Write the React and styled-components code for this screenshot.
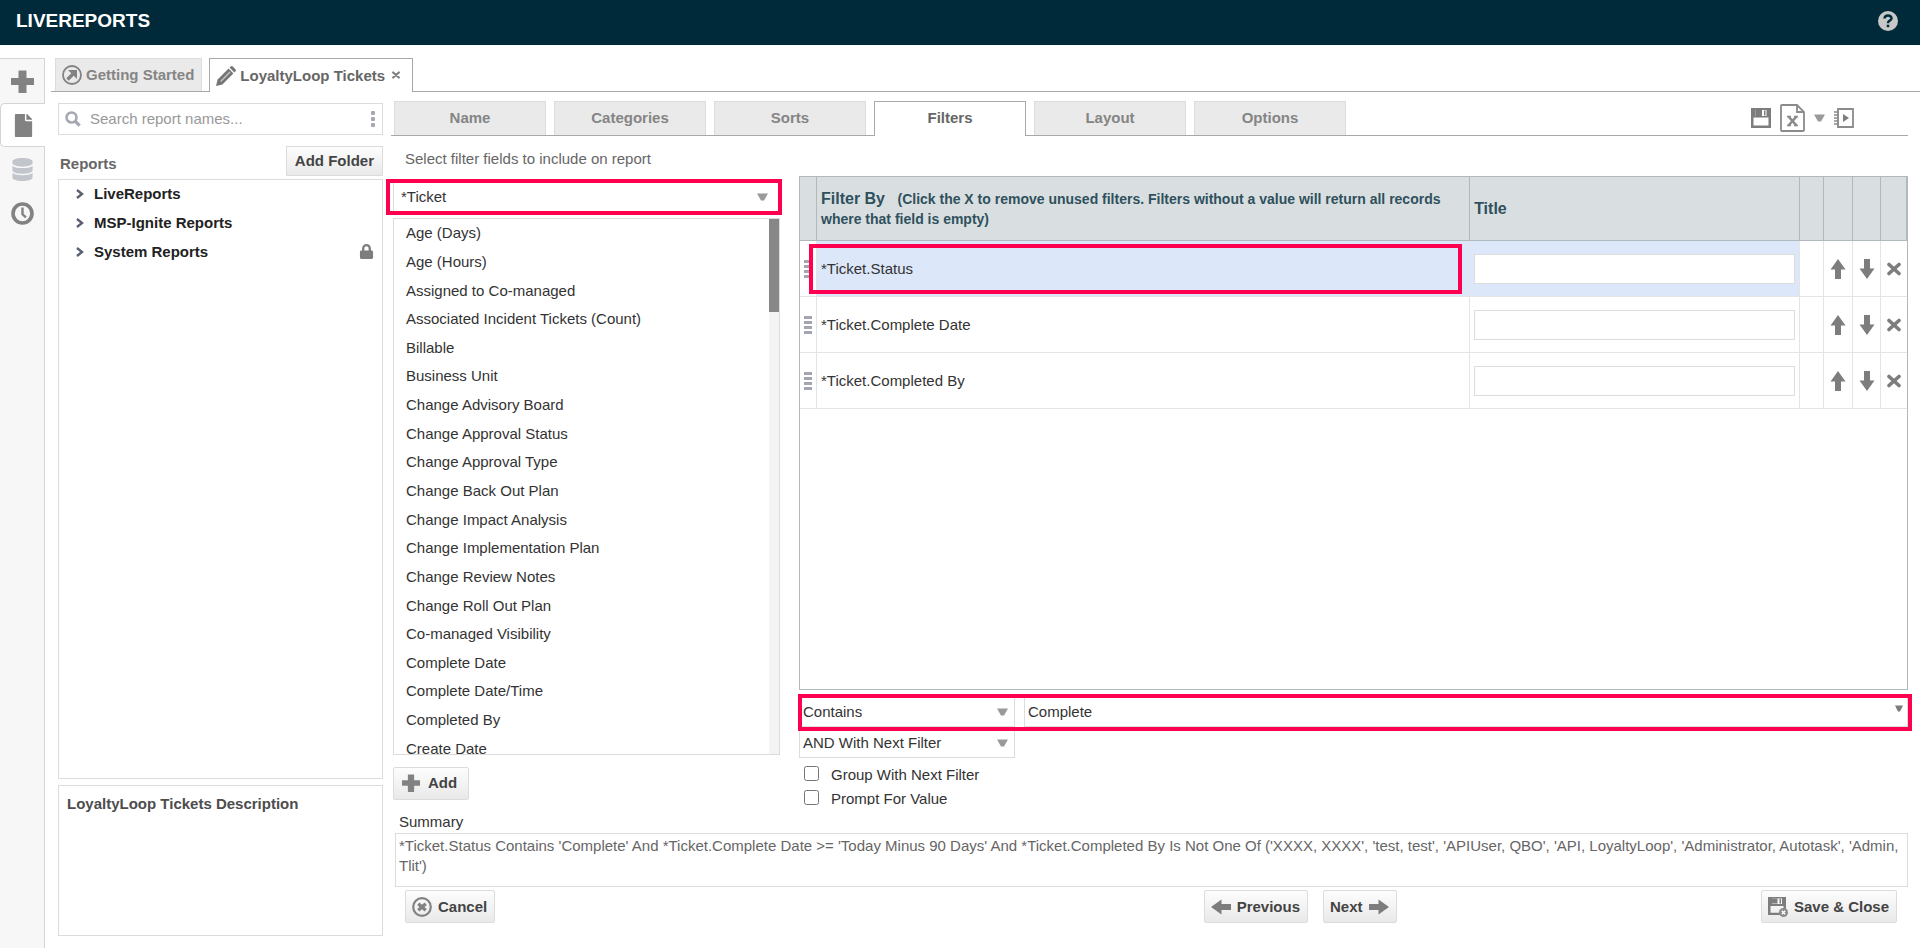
import React, { useState } from 'react';
import styled, { createGlobalStyle, css } from 'styled-components';
import { FaFile, FaDatabase, FaLock } from 'react-icons/fa';

const navTabs = ['Name', 'Categories', 'Sorts', 'Filters', 'Layout', 'Options'];

const folders = [
    { name: 'LiveReports' },
    { name: 'MSP-Ignite Reports' },
    { name: 'System Reports', locked: true },
];

const fields = [
    'Age (Days)',
    'Age (Hours)',
    'Assigned to Co-managed',
    'Associated Incident Tickets (Count)',
    'Billable',
    'Business Unit',
    'Change Advisory Board',
    'Change Approval Status',
    'Change Approval Type',
    'Change Back Out Plan',
    'Change Impact Analysis',
    'Change Implementation Plan',
    'Change Review Notes',
    'Change Roll Out Plan',
    'Co-managed Visibility',
    'Complete Date',
    'Complete Date/Time',
    'Completed By',
    'Create Date',
];

const filters = ['*Ticket.Status', '*Ticket.Complete Date', '*Ticket.Completed By'];

const PlusIcon = ({ size }) => (
    <svg width={size} height={size} viewBox="0 0 23 23" fill="#828282">
        <path d="M8 0.500h7q.5 0 .5.5v7h7q.5 0 .5.5v6q0 .5-.5.5h-7v7.500q0 .5-.5.5h-7q-.5 0-.5-.5v-7.500h-7q-.5 0-.5-.5v-6q0-.5.5-.5h7v-7q0-.5.5-.5z" />
    </svg>
);

const ClockIcon = () => (
    <svg width="23" height="23" viewBox="0 0 23 23" fill="none" stroke="#828282">
        <circle cx="11.500" cy="11.500" r="9.500" strokeWidth="3.600" />
        <path d="M11.500 5.500v6.800l3.400 3" strokeWidth="2.400" />
    </svg>
);

const StartIcon = () => (
    <svg width="20" height="20" viewBox="0 0 20 20" fill="none" stroke="#828282">
        <circle cx="10" cy="10" r="9" strokeWidth="1.800" />
        <path d="M5.500 14.500l6-6" strokeWidth="3.400" />
        <path d="M6 5h9v9l-3-3-3-3z" fill="#828282" stroke="none" />
    </svg>
);

const PencilIcon = () => (
    <svg width="20" height="20" viewBox="0 0 20 20">
        <path d="M0 20l1.600-6.400L12.600 2.600l4.800 4.800L6.400 18.400z" fill="#757575" />
        <path d="M13.600 1.600l1-1q1-1 2.200 0l2.600 2.600q1 1.200 0 2.200l-1 1z" fill="#757575" />
        <path d="M4.600 15.400L14 6" stroke="#c4c4c4" strokeWidth="1.400" />
    </svg>
);

const SearchIcon = () => (
    <svg width="16" height="16" viewBox="0 0 16 16" fill="none" stroke="#a6a8b3">
        <circle cx="6.500" cy="6.500" r="5" strokeWidth="2.600" />
        <path d="M10 10l4.600 4.600" strokeWidth="3.200" />
    </svg>
);

const ChevronIcon = () => (
    <svg width="8" height="10" viewBox="0 0 8 10" fill="none" stroke="#5b6072" strokeWidth="2.400">
        <path d="M1 1l5 4-5 4" />
    </svg>
);

const Caret = ({ small }) => (
    <svg width={small ? 8 : 11} height={small ? 7 : 8} viewBox="0 0 11 8" preserveAspectRatio="none" fill={small ? '#7d7d7d' : '#9a9a9a'}>
        <path d="M0 0.500h11L7 7.500h-3z" />
    </svg>
);

const CrossIcon = ({ size }) => (
    <svg width={size} height={size} viewBox="0 0 14 14" fill="none" stroke="#7d7d7d" strokeWidth="3.600" strokeLinecap="round">
        <path d="M2 2.500l10 9M12 2.500l-10 9" />
    </svg>
);

const arrowTurns = { up: 0, right: 90, down: 180, left: 270 };

const ArrowIcon = ({ to }) => (
    <svg width="20" height="20" viewBox="0 0 20 20" fill="#7d7d7d">
        <path d="M10 0l7.500 10.500h-4.500v9.500h-6v-9.500h-4.500z" transform={`rotate(${arrowTurns[to]} 10 10)`} />
    </svg>
);

const HandleIcon = () => (
    <svg width="8" height="18" viewBox="0 0 8 18" fill="#a3a5b1">
        <path d="M0 0h8v3h-8zM0 5h8v3h-8zM0 10h8v3h-8zM0 15h8v3h-8z" />
    </svg>
);

const SaveIcon = () => (
    <svg width="20" height="20" viewBox="0 0 20 20">
        <path d="M0 0h20v20h-20zM2.500 9.500v8h15v-8zM4.500 2v6h11v-6z" fill="#7d7d7d" fillRule="evenodd" />
        <path d="M4.500 1.500h6.500v6.500h-6.500zM13 2.500h1.500v5h-1.500z" fill="#7d7d7d" />
    </svg>
);

const SaveCloseIcon = () => (
    <svg width="20" height="20" viewBox="0 0 20 20">
        <path d="M0 0h18v18h-18zM2.500 9v6.800h13v-6.800zM4 1.500v5.500h10v-5.500z" fill="#7d7d7d" fillRule="evenodd" />
        <path d="M4 1.500h5.500v5h-5.500zM11.500 2h1.500v4.500h-1.500z" fill="#7d7d7d" />
        <circle cx="15.500" cy="15.500" r="4.500" fill="#8a8a8a" />
        <path d="M13.800 13.800l3.400 3.400M17.200 13.800l-3.400 3.400" stroke="#fff" strokeWidth="1.400" />
    </svg>
);

const ExcelIcon = () => (
    <svg width="25" height="28" viewBox="0 0 25 28" fill="none" stroke="#8b8b8b" strokeWidth="1.800">
        <path d="M2 1h15l7 7v18q0 1-1 1h-21q-1 0-1-1v-24q0-1 1-1zM17 1v7h7" />
        <path d="M8.500 12.500l8 9M16.500 12.500l-8 9" strokeWidth="2.600" />
        <path d="M7 12.500h4M14 12.500h4M7 21.500h4M14 21.500h4" strokeWidth="1.400" />
    </svg>
);

const BookIcon = () => (
    <svg width="20" height="20" viewBox="0 0 20 20" fill="none" stroke="#8b8b8b">
        <path d="M4 1h15v18h-15z" strokeWidth="1.800" />
        <path d="M0 4h5M0 7h5M0 10h5M0 13h5M0 16h5" strokeWidth="1.600" />
        <path d="M9 6l6 4-6 4z" fill="#7d7d7d" stroke="none" />
    </svg>
);

const CancelIcon = () => (
    <svg width="20" height="20" viewBox="0 0 20 20" fill="none" stroke="#828282">
        <circle cx="10" cy="10" r="8.800" strokeWidth="2.200" />
        <path d="M6.300 6.800l7.400 6.400M13.700 6.800l-7.400 6.400" strokeWidth="3.400" />
    </svg>
);

const HelpIcon = () => (
    <svg width="20" height="20" viewBox="0 0 20 20">
        <circle cx="10" cy="10" r="10" fill="#c8c8c8" />
        <path d="M6.500 7.500q.3-3 3.500-3t3.500 2.700q0 1.600-1.800 2.500-1.700.9-1.700 2.500" fill="none" stroke="#002a3a" strokeWidth="2.500" />
        <path d="M8.700 13.700h2.600v2.500h-2.600z" fill="#002a3a" />
    </svg>
);

const Picker = ({ label, value, small }) => (
    <PickerBox>
        <select aria-label={label} defaultValue={value}>
            <option>{value}</option>
        </select>
        <PickerArrow $small={small}><Caret small={small} /></PickerArrow>
    </PickerBox>
);

const FilterRow = ({ name, selected }) => (
    <tr>
        <HandleCell><HandleIcon /></HandleCell>
        <NameCell $selected={selected}>
            {name}
            {selected && <CellMark />}
        </NameCell>
        <TitleCell $selected={selected}>
            <input type="text" aria-label={`${name} title`} />
        </TitleCell>
        <td />
        <td><IconButton aria-label="Move up"><ArrowIcon to="up" /></IconButton></td>
        <td><IconButton aria-label="Move down"><ArrowIcon to="down" /></IconButton></td>
        <td><IconButton aria-label="Remove"><CrossIcon size={14} /></IconButton></td>
    </tr>
);

const App = () => {
    const [tab, setTab] = useState('Filters');
    const [group, setGroup] = useState(false);
    const [prompt, setPrompt] = useState(false);

    return (
        <Page>
            <GlobalStyle />
            <TopBar>
                <h1>LIVEREPORTS</h1>
                <IconButton aria-label="Help"><HelpIcon /></IconButton>
            </TopBar>
            <Shell>
                <Rail>
                    <RailButton aria-label="New"><PlusIcon size={23} /></RailButton>
                    <RailButton aria-label="Reports" $active><FaFile size={23} color="#828282" /></RailButton>
                    <RailButton aria-label="Data"><FaDatabase size={23} color="#c3c5cd" /></RailButton>
                    <RailButton aria-label="History"><ClockIcon /></RailButton>
                </Rail>
                <Main>
                    <DocTabs>
                        <DocTab><StartIcon />Getting Started</DocTab>
                        <DocTab $active><PencilIcon />LoyaltyLoop Tickets<CloseMark><CrossIcon size={8} /></CloseMark></DocTab>
                    </DocTabs>
                    <Columns>
                        <Sidebar>
                            <SearchBox>
                                <SearchIcon />
                                <input type="text" aria-label="Search report names" placeholder="Search report names..." />
                                <Dots><i /><i /><i /></Dots>
                            </SearchBox>
                            <SidebarHead>
                                <h2>Reports</h2>
                                <FolderButton>Add Folder</FolderButton>
                            </SidebarHead>
                            <Tree>
                                {folders.map((f) => (
                                    <li key={f.name}>
                                        <ChevronIcon />
                                        <span>{f.name}</span>
                                        {f.locked && <FaLock size={15} color="#7d7d7d" />}
                                    </li>
                                ))}
                            </Tree>
                            <Description>LoyaltyLoop Tickets Description</Description>
                        </Sidebar>

                        <Content>
                            <TabStrip>
                                {navTabs.map((t) => (
                                    <NavTab key={t} $active={t === tab} onClick={() => setTab(t)}>{t}</NavTab>
                                ))}
                                <Tools>
                                    <IconButton aria-label="Save"><SaveIcon /></IconButton>
                                    <IconButton aria-label="Export to Excel"><ExcelIcon /></IconButton>
                                    <IconButton aria-label="Export options"><Caret /></IconButton>
                                    <IconButton aria-label="Run"><BookIcon /></IconButton>
                                </Tools>
                            </TabStrip>

                            <Panels>
                                <FieldPanel>
                                    <Hint>Select filter fields to include on report</Hint>
                                    <CategoryMark>
                                        <Picker label="Category" value="*Ticket" />
                                    </CategoryMark>
                                    <FieldBox>
                                        <FieldList>
                                            {fields.map((f) => <li key={f}>{f}</li>)}
                                        </FieldList>
                                        <ScrollTrack><ScrollThumb /></ScrollTrack>
                                    </FieldBox>
                                    <Button $start><PlusIcon size={18} />Add</Button>
                                </FieldPanel>

                                <FilterPanel>
                                    <TableBox>
                                        <FilterTable>
                                            <colgroup>
                                                <col width="17" />
                                                <col width="59%" />
                                                <col />
                                                <col width="24" />
                                                <col width="29" />
                                                <col width="28" />
                                                <col width="26" />
                                            </colgroup>
                                            <thead>
                                                <tr>
                                                    <th />
                                                    <th>
                                                        Filter By <small>(Click the X to remove unused filters. Filters without a value will return all records where that field is empty)</small>
                                                    </th>
                                                    <th>Title</th>
                                                    <th />
                                                    <th />
                                                    <th />
                                                    <th />
                                                </tr>
                                            </thead>
                                            <tbody>
                                                {filters.map((f, i) => <FilterRow key={f} name={f} selected={i === 0} />)}
                                            </tbody>
                                        </FilterTable>
                                    </TableBox>
                                    <ConditionMark>
                                        <Picker label="Operator" value="Contains" />
                                        <Picker label="Value" value="Complete" small />
                                    </ConditionMark>
                                    <JoinRow>
                                        <Picker label="Join" value="AND With Next Filter" />
                                    </JoinRow>
                                    <Checks>
                                        <label>
                                            <input type="checkbox" checked={group} onChange={(e) => setGroup(e.target.checked)} />
                                            Group With Next Filter
                                        </label>
                                        <label>
                                            <input type="checkbox" checked={prompt} onChange={(e) => setPrompt(e.target.checked)} />
                                            Prompt For Value
                                        </label>
                                    </Checks>
                                </FilterPanel>
                            </Panels>

                            <SummaryTitle>Summary</SummaryTitle>
                            <Summary>
                                *Ticket.Status Contains 'Complete' And *Ticket.Complete Date &gt;= 'Today Minus 90 Days' And *Ticket.Completed By Is Not One Of ('XXXX, XXXX', 'test, test', 'APIUser, QBO', 'API, LoyaltyLoop', 'Administrator, Autotask', 'Admin, Tlit')
                            </Summary>
                            <Footer>
                                <Button><CancelIcon />Cancel</Button>
                                <div>
                                    <Button><ArrowIcon to="left" />Previous</Button>
                                    <Button>Next<ArrowIcon to="right" /></Button>
                                </div>
                                <Button><SaveCloseIcon />Save &amp; Close</Button>
                            </Footer>
                        </Content>
                    </Columns>
                </Main>
            </Shell>
        </Page>
    );
};

export default App;

const GlobalStyle = createGlobalStyle`
    * {
        box-sizing: border-box;
    }
    body {
        margin: 0;
        background: #fff;
        color: #333;
        font-family: "Liberation Sans", Arial, sans-serif;
        font-size: 15px;
        line-height: 20px;
    }
    button, input, select {
        font: inherit;
        color: inherit;
    }
    h1, h2, h3, p, ul {
        margin: 0;
        padding: 0;
        list-style: none;
    }
    svg {
        display: block;
        flex: none;
    }
`;

const marker = css`
    content: "";
    position: absolute;
    border: 4px solid #ff0050;
    pointer-events: none;
`;

const Page = styled.div`
    min-height: 100vh;
    display: flex;
    flex-direction: column;
`;

const TopBar = styled.header`
    display: flex;
    align-items: center;
    justify-content: space-between;
    height: 45px;
    padding: 0 22px 4px 16px;
    background: #002a3a;
    color: #fff;
    h1 {
        font-size: 19px;
    }
`;

const IconButton = styled.button`
    display: flex;
    align-items: center;
    justify-content: center;
    padding: 0;
    border: 0;
    background: none;
`;

const Shell = styled.div`
    flex: 1;
    display: flex;
    padding-top: 13px;
`;

const Rail = styled.nav`
    width: 45px;
    border-top: 1px solid #d4d4d4;
    border-right: 1px solid #d4d4d4;
    background: #f7f7f7;
`;

const RailButton = styled.button`
    display: flex;
    align-items: center;
    justify-content: center;
    width: 44px;
    height: 44px;
    padding: 0;
    border: 0;
    background: none;
    ${({ $active }) => $active && css`
        width: 45px;
        border: 1px solid #d4d4d4;
        border-right: 0;
        border-radius: 5px 0 0 5px;
        background: #fff;
    `}
`;

const Main = styled.main`
    flex: 1;
    min-width: 0;
    display: flex;
    flex-direction: column;
`;

const DocTabs = styled.div`
    display: flex;
    gap: 7px;
    height: 34px;
    margin-left: 6px;
    padding-left: 4px;
    border-bottom: 1px solid #a6a8a9;
`;

const DocTab = styled.button`
    display: flex;
    align-items: center;
    gap: 4px;
    height: 33px;
    padding: 0 7px 0 6px;
    border: 1px solid #dcdcdc;
    border-bottom: 0;
    background: #eaeaea;
    color: #858585;
    font-weight: bold;
    ${({ $active }) => $active && css`
        height: 34px;
        padding-right: 12px;
        border-color: #a6a8a9;
        background: #fff;
        color: #666;
    `}
`;

const CloseMark = styled.span`
    padding: 0 0 2px 3px;
`;

const Columns = styled.div`
    flex: 1;
    display: flex;
    gap: 8px;
    padding: 0 12px 12px 13px;
`;

const Sidebar = styled.aside`
    display: flex;
    flex-direction: column;
    width: 325px;
    padding-top: 11px;
`;

const SearchBox = styled.div`
    display: flex;
    align-items: center;
    height: 32px;
    padding: 0 7px 0 6px;
    border: 1px solid #dcdcdc;
    input {
        flex: 1;
        min-width: 0;
        padding: 0 9px;
        border: 0;
        outline: 0;
    }
    input::placeholder {
        color: #999;
    }
`;

const Dots = styled.span`
    display: flex;
    flex-direction: column;
    gap: 2px;
    i {
        width: 4px;
        height: 4px;
        border-radius: 1px;
        background: #a6a8b3;
    }
`;

const SidebarHead = styled.div`
    display: flex;
    justify-content: space-between;
    align-items: center;
    padding: 11px 0 3px 2px;
    h2 {
        padding-top: 6px;
        color: #666;
        font-size: 15px;
    }
`;

const Button = styled.button`
    display: flex;
    align-items: center;
    gap: 6px;
    height: 33px;
    padding: 0 7px 0 6px;
    border: 1px solid #dcdcdc;
    border-radius: 2px;
    background: linear-gradient(#fdfdfd, #e9e9e9);
    color: #444;
    font-weight: bold;
    ${({ $start }) => $start && css`
        align-self: flex-start;
        gap: 8px;
        padding: 0 11px 2px 8px;
    `}
`;

const FolderButton = styled(Button)`
    height: 30px;
    padding: 0 8px;
    border-radius: 0;
`;

const Tree = styled.ul`
    flex: 1;
    border: 1px solid #dcdcdc;
    li {
        display: flex;
        align-items: center;
        height: 29px;
        padding: 0 8px 2px 17px;
        color: #222;
        font-weight: bold;
    }
    span {
        flex: 1;
        padding-left: 10px;
    }
`;

const Description = styled.h3`
    height: 151px;
    margin-top: 6px;
    padding: 8px;
    border: 1px solid #dcdcdc;
    color: #4d4d4d;
    font-size: 15px;
`;

const Content = styled.section`
    flex: 1;
    min-width: 0;
    display: flex;
    flex-direction: column;
    padding: 9px 0 13px;
`;

const TabStrip = styled.div`
    display: flex;
    gap: 8px;
    height: 35px;
    padding-left: 3px;
    border-bottom: 1px solid #a6a8a9;
`;

const NavTab = styled.button`
    width: 152px;
    height: 34px;
    padding: 0 0 2px;
    border: 1px solid #dcdcdc;
    border-bottom: 0;
    background: #eaeaea;
    color: #858585;
    font-weight: bold;
    ${({ $active }) => $active && css`
        height: 35px;
        border-color: #a6a8a9;
        background: #fff;
        color: #666;
    `}
`;

const Tools = styled.div`
    display: flex;
    align-items: center;
    gap: 9px;
    margin-left: auto;
    padding-right: 54px;
`;

const Panels = styled.div`
    flex: 1;
    display: flex;
    gap: 19px;
    padding-left: 2px;
`;

const FieldPanel = styled.div`
    display: flex;
    flex-direction: column;
    width: 387px;
    padding-bottom: 12px;
`;

const Hint = styled.p`
    padding: 13px 12px 12px;
    color: #666;
`;

const PickerBox = styled.div`
    position: relative;
    select {
        display: block;
        width: 100%;
        height: 31px;
        padding: 0 24px 0 3px;
        border: 1px solid #dcdcdc;
        border-radius: 0;
        background: #fff;
        appearance: none;
    }
`;

const PickerArrow = styled.span`
    position: absolute;
    top: ${({ $small }) => ($small ? 9 : 12)}px;
    right: ${({ $small }) => ($small ? 5 : 7)}px;
    pointer-events: none;
`;

const CategoryMark = styled.div`
    position: relative;
    margin-bottom: 6px;
    select {
        padding-left: 7px;
    }
    ${PickerArrow} {
        right: 12px;
    }
    &::after {
        ${marker}
        inset: -2px -2px -3px -7px;
    }
`;

const FieldBox = styled.div`
    flex: 1;
    display: flex;
    margin-bottom: 12px;
    border: 1px solid #dcdcdc;
    overflow: hidden;
`;

/* taller than its box, so the last field is cut by the border */
const FieldList = styled.ul`
    flex: 1;
    display: grid;
    grid-auto-rows: 1fr;
    align-items: center;
    height: 544px;
    margin-bottom: -20px;
    padding-left: 12px;
`;

const ScrollTrack = styled.div`
    width: 10px;
    background: #f4f4f4;
`;

const ScrollThumb = styled.div`
    height: 93px;
    background: #878787;
`;

const FilterPanel = styled.div`
    flex: 1;
    min-width: 0;
    display: flex;
    flex-direction: column;
    padding: 40px 0 7px;
`;

const TableBox = styled.div`
    flex: 1;
    border: 1px solid #b0babd;
`;

const FilterTable = styled.table`
    width: 100%;
    table-layout: fixed;
    border-collapse: separate;
    border-spacing: 0;
    th {
        height: 64px;
        padding: 0 8px 0 4px;
        border-right: 1px solid #b0babd;
        border-bottom: 1px solid #b0babd;
        background: #d9dfe1;
        color: #2f505d;
        font-size: 16px;
        line-height: 20px;
        text-align: left;
    }
    th:not(:nth-child(2)):not(:nth-child(3)) {
        padding: 0;
    }
    small {
        padding-left: 8px;
        font-size: 14px;
    }
    td {
        height: 56px;
        padding: 0;
        border-right: 1px solid #e4e4e4;
        border-bottom: 1px solid #e4e4e4;
    }
    td:last-child {
        border-right: 0;
    }
    ${IconButton} {
        width: 100%;
    }
`;

const HandleCell = styled.td`
    svg {
        margin: 0 auto;
    }
`;

const NameCell = styled.td`
    position: relative;
    background: ${({ $selected }) => ($selected ? '#dce8f9' : '#fff')};
    && {
        padding-left: 4px;
    }
`;

const CellMark = styled.span`
    &::after {
        ${marker}
        inset: 3px 7px 2px -8px;
    }
`;

const TitleCell = styled.td`
    background: ${({ $selected }) => ($selected ? '#dce8f9' : '#fff')};
    && {
        padding: 0 4px;
    }
    input {
        display: block;
        width: 100%;
        height: 30px;
        border: 1px solid #dcdcdc;
        background: #fff;
    }
`;

const ConditionMark = styled.div`
    position: relative;
    z-index: 1;
    display: grid;
    grid-template-columns: 216px 1fr;
    gap: 9px;
    margin-top: 6px;
    &::after {
        ${marker}
        inset: -2px -4px -4px -1px;
    }
`;

const JoinRow = styled.div`
    width: 216px;
`;

/* the pane ends just under the second option */
const Checks = styled.div`
    height: 42px;
    margin-top: 5px;
    overflow: hidden;
    label {
        display: flex;
        align-items: center;
        gap: 12px;
        height: 24px;
        padding-left: 5px;
    }
    input {
        width: 15px;
        height: 15px;
        margin: 0 0 3px;
    }
`;

const SummaryTitle = styled.h3`
    padding: 0 8px 1px;
    font-size: 15px;
    font-weight: normal;
`;

const Summary = styled.p`
    min-height: 54px;
    margin-left: 4px;
    padding: 2px 3px;
    border: 1px solid #dcdcdc;
    color: #666;
`;

const Footer = styled.footer`
    display: flex;
    align-items: center;
    justify-content: space-between;
    padding: 3px 11px 0 14px;
    div {
        display: flex;
        gap: 15px;
        margin-left: 344px;
    }
`;
